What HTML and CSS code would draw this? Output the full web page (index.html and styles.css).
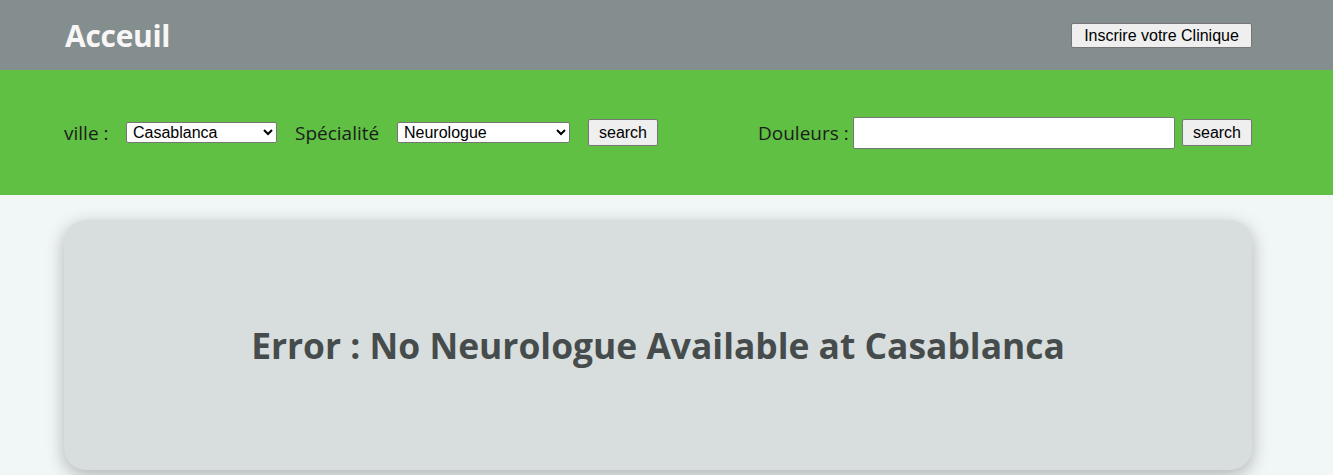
FILE: index.html
```html
<!DOCTYPE html>
<html lang="fr">
<head>
<meta charset="utf-8">
<title>Acceuil</title>
<link rel="stylesheet" href="styles.css">
</head>
<body>
<header class="topbar">
  <div class="wrap topbar-inner">
    <h1 class="brand">Acceuil</h1>
    <button class="btn btn-head" type="button">Inscrire votre Clinique</button>
  </div>
</header>
<section class="searchbar">
  <div class="wrap search-inner">
    <form class="search-left">
      <label class="lbl lbl-ville">ville :</label>
      <select class="sel sel-ville"><option>Casablanca</option></select>
      <label class="lbl lbl-spec">Spécialité</label>
      <select class="sel sel-spec"><option>Neurologue</option></select>
      <button class="btn btn-search" type="button">search</button>
    </form>
    <form class="search-right">
      <label class="lbl lbl-doul">Douleurs :</label>
      <input class="inp" type="text">
      <button class="btn btn-search" type="button">search</button>
    </form>
  </div>
</section>
<main class="wrap content">
  <div class="card">
    <h2 class="error">Error : No Neurologue Available at Casablanca</h2>
  </div>
</main>
</body>
</html>
```
FILE: styles.css
```css
* { box-sizing: border-box; }
html, body { margin: 0; padding: 0; }
body {
  background: #f1f6f6;
  font-family: "Open Sans", "Noto Sans", sans-serif;
  height: 475px;
  overflow: hidden;
}
.wrap {
  width: 1188px;
  margin-left: 64px;
}
.topbar {
  background: #848e8e;
  height: 70px;
}
.topbar-inner {
  height: 70px;
  display: flex;
  align-items: center;
  justify-content: space-between;
}
.brand {
  margin: 0 0 0 1px;
  color: #f8f6f6;
  font-size: 30px;
  font-weight: 700;
  letter-spacing: -0.3px;
}
.btn {
  font-family: "Liberation Sans", Arial, sans-serif;
  font-size: 16px;
  color: #000;
  background: #efefef;
  border: 1px solid #767676;
  border-radius: 2px;
  padding: 0 8px;
  margin: 0;
}
.btn-head {
  width: 181px;
  height: 25px;
  margin-top: 1px;
}
.searchbar {
  background: #5fc043;
  height: 125px;
}
.search-inner {
  height: 125px;
  display: flex;
  align-items: center;
  justify-content: space-between;
}
.search-left, .search-right {
  display: flex;
  align-items: center;
  margin: 0;
}
.lbl {
  font-size: 19px;
  color: #1c1c1c;
}
.lbl-ville { width: 62px; }
.lbl-spec { margin-left: 18px; width: 102px; }
.lbl-doul { width: 95px; text-align: left; }
.sel {
  font-family: "Liberation Sans", Arial, sans-serif;
  font-size: 16px;
  height: 21px;
  background: #fff;
  border: 1px solid #767676;
  border-radius: 2px;
  color: #000;
  padding: 0 2px;
}
.sel-ville { width: 151px; }
.sel-spec { width: 173px; }
.btn-search {
  width: 70px;
  height: 27px;
}
.search-left .btn-search { margin-left: 18px; }
.inp {
  width: 322px;
  height: 32px;
  border: 1px solid #767676;
  border-radius: 2px;
  background: #fff;
  margin-right: 7px;
}
.content {
  padding-top: 25px;
}
.card {
  height: 250px;
  background: #d8dede;
  border-radius: 22px;
  box-shadow: 0 5px 18px rgba(0,0,0,0.28);
  display: flex;
  align-items: center;
  justify-content: center;
}
.error {
  margin: 0;
  color: #464c4c;
  font-size: 35.4px;
  font-weight: 700;
}
```
